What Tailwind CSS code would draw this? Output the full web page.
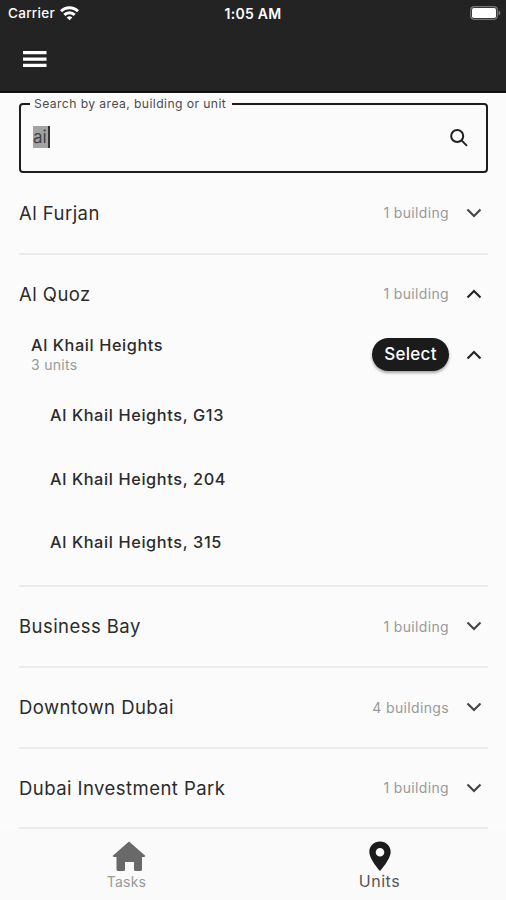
<!DOCTYPE html>
<html lang="en">
<head>
<meta charset="utf-8">
<title>Units</title>
<script src="https://cdn.jsdelivr.net/npm/@tailwindcss/browser@4"></script>
</head>
<body class="bg-[#fbfbfb]">
<svg class="hidden">
  <symbol id="down" viewBox="0 0 16 10"><path d="M1.500 1.500 8 8l6.500-6.500" fill="none" stroke="currentColor" stroke-width="2.100"/></symbol>
  <symbol id="up" viewBox="0 0 16 10"><path d="M1.500 8.500 8 2l6.500 6.500" fill="none" stroke="currentColor" stroke-width="2.100"/></symbol>
</svg>
<div class="w-[506px] h-[900px] flex flex-col overflow-hidden bg-[#fbfbfb] font-['Inter',sans-serif] text-[#2b2b2b]">
  <header class="h-[93px] shrink-0 bg-[#232323] border-b-2 border-[#111] text-white">
    <div class="h-[27px] grid grid-cols-3 items-center px-2 text-[13.500px] font-medium">
      <div class="flex items-center gap-[5px]"><span class="tracking-[0.3px]">Carrier</span>
        <svg class="w-[19px] h-[15px]" viewBox="0 0 19 15" fill="none" stroke="white" stroke-width="2.900"><path d="M1 5.300a12 12 0 0 1 17 0"/><path d="M4.300 8.900a7.400 7.400 0 0 1 10.400 0"/><path d="M9.500 14.300 6.700 11.500a4 4 0 0 1 5.600 0Z" fill="white" stroke="none"/></svg>
      </div>
      <span class="text-center text-[14px] font-semibold tracking-[0.3px] pb-px">1:05 AM</span>
      <svg class="w-[31px] h-[14px] justify-self-end translate-x-[3px] -translate-y-px" viewBox="0 0 31 14"><rect x=".7" y=".7" width="26.600" height="12.600" rx="3.500" fill="none" stroke="#777" stroke-width="1.200"/><rect x="2" y="2" width="24" height="10" rx="1.800" fill="white"/><path d="M28.500 4.500q2 .8 2 2.500t-2 2.500z" fill="#777"/></svg>
    </div>
    <div class="h-[64px] flex items-center pl-[23px]">
      <svg class="w-[24px] h-[18px]" viewBox="0 0 24 18" fill="#fff"><path d="M0 1h23.500v3.300H0zM0 7.400h23.500v3.300H0zM0 13.800h23.500v3.300H0z"/></svg>
    </div>
  </header>

  <main class="h-[736px] shrink-0 px-[19px] pr-[18px] pt-[2px]">
    <fieldset class="h-[78px] border-2 border-[#1d1d1d] rounded-[4px] pl-[5px] min-w-0">
      <legend class="pl-[4px] pr-[6px] ml-[4px] text-[12.200px] leading-[17px] tracking-[0.400px] text-[#4c4c4c] h-[17px]">Search by area, building or unit</legend>
      <div class="flex items-center justify-between h-[50px] pl-[7px] pr-[18px]">
        <div class="flex items-center h-[22px] bg-[#a3a3a3] border-r-2 border-[#333] text-[17px] leading-[22px] w-[17px] overflow-hidden text-[#444]">ai</div>
        <svg class="w-[18px] h-[18px] mt-[2px]" viewBox="0 0 18 18" fill="none" stroke="#202020" stroke-width="2"><circle cx="7.200" cy="7" r="6"/><path d="m11.500 11.400 5.500 5.500"/></svg>
      </div>
    </fieldset>

    <section class="h-[81.500px] flex items-center border-b-2 border-[#ebebeb]">
      <h2 class="flex-1 pt-[2px] text-[18.500px] tracking-[0.450px]">Al Furjan</h2>
      <span class="text-[14px] text-[#999] tracking-[0.350px]">1 building</span>
      <svg class="w-[16px] h-[10px] ml-[17px] mr-[6px] text-[#444]"><use href="#down"/></svg>
    </section>

    <section class="h-[332.500px] border-b-2 border-[#ebebeb]">
      <div class="h-[79px] flex items-center">
        <h2 class="flex-1 pt-[2px] text-[18.500px] tracking-[0.450px]">Al Quoz</h2>
        <span class="pb-px text-[14px] text-[#999] tracking-[0.350px]">1 building</span>
        <svg class="w-[16px] h-[10px] ml-[17px] mr-[6px] text-[#222]"><use href="#up"/></svg>
      </div>
      <div class="h-[50px] flex items-center pl-3 pb-[8px]">
        <div class="flex-1">
          <h3 class="text-[16.300px] leading-[20px] font-medium tracking-[0.600px]">Al Khail Heights</h3>
          <p class="text-[14px] leading-[19px] text-[#999] tracking-[0.3px]">3 units</p>
        </div>
        <button class="w-[77px] h-[33px] rounded-full bg-[#1b1b1b] text-white text-[17px] font-medium tracking-[0.3px] shadow-[0_2px_3px_rgba(0,0,0,0.35)]">Select</button>
        <svg class="w-[16px] h-[10px] ml-[17px] mr-[6px] text-[#222]"><use href="#up"/></svg>
      </div>
      <ul class="pl-[31px] text-[16.300px] font-medium tracking-[0.630px]">
        <li class="h-[63.5px] flex items-center">Al Khail Heights, G13</li>
        <li class="h-[63.5px] flex items-center">Al Khail Heights, 204</li>
        <li class="h-[63.5px] flex items-center">Al Khail Heights, 315</li>
      </ul>
    </section>

    <section class="h-[80.5px] flex items-center border-b-2 border-[#ebebeb]">
      <h2 class="flex-1 pt-[2px] text-[18.500px] tracking-[0.450px]">Business Bay</h2>
      <span class="text-[14px] text-[#999] tracking-[0.350px]">1 building</span>
      <svg class="w-[16px] h-[10px] ml-[17px] mr-[6px] text-[#444]"><use href="#down"/></svg>
    </section>
    <section class="h-[81px] flex items-center border-b-2 border-[#ebebeb]">
      <h2 class="flex-1 pt-[2px] text-[18.500px] tracking-[0.450px]">Downtown Dubai</h2>
      <span class="text-[14px] text-[#999] tracking-[0.350px]">4 buildings</span>
      <svg class="w-[16px] h-[10px] ml-[17px] mr-[6px] text-[#444]"><use href="#down"/></svg>
    </section>
    <section class="h-[80.5px] flex items-center border-b-2 border-[#ebebeb]">
      <h2 class="flex-1 pt-[2px] text-[18.500px] tracking-[0.450px]">Dubai Investment Park</h2>
      <span class="text-[14px] text-[#999] tracking-[0.350px]">1 building</span>
      <svg class="w-[16px] h-[10px] ml-[17px] mr-[6px] text-[#444]"><use href="#down"/></svg>
    </section>
  </main>

  <nav class="flex-1 grid grid-cols-2 pt-[12px] bg-[#fafafa]">
    <a class="flex flex-col items-center text-[14px] leading-[20px] tracking-[0.2px] text-[#999]">
      <svg class="w-[34px] h-[31px] ml-[4px]" viewBox="0 0 34 31" fill="#696969"><path d="M17 .5 33.500 15l-1.300 1H30v12.500q0 1.500-1.500 1.500h-5q-1.500 0-1.500-1.500V21h-9v7.500q0 1.500-1.500 1.500h-5Q4.500 30 4.500 28.500V16H1.800L.5 15Z"/></svg>
      <span>Tasks</span>
    </a>
    <a class="flex flex-col items-center text-[16px] leading-[20px] tracking-[0.5px] text-[#555]">
      <svg class="w-[22px] h-[30px] ml-[1px]" viewBox="0 0 22 30"><path fill="#1c1c1c" fill-rule="evenodd" d="M11 .5C5 .5.300 5 .300 11 .300 18 11 30 11 30s10.700-12 10.700-19C21.700 5 17 .5 11 .5Zm0 6.500a4.300 4.300 0 1 1 0 8.600 4.300 4.300 0 0 1 0-8.600Z"/></svg>
      <span>Units</span>
    </a>
  </nav>
</div>
</body>
</html>
